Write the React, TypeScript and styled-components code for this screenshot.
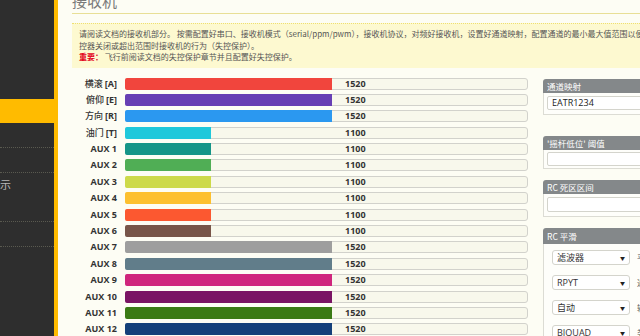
import React from "react";
import styled, { createGlobalStyle } from "styled-components";

const Global = createGlobalStyle`
  html, body { margin: 0; padding: 0; }
  body {
    width: 640px; height: 336px; overflow: hidden;
    background: #fdfdf4;
    font-family: "Open Sans", "Noto Sans CJK SC", sans-serif;
  }
`;

const Page = styled.div`
  display: flex;
  width: 640px;
  height: 336px;
  overflow: hidden;
`;

const Sidebar = styled.nav`
  flex: 0 0 54px;
  background: #2e2e2e;
  border-right: 4px solid #ffbb00;
  padding-top: 99px;
  overflow: hidden;
  display: flex;
  flex-direction: column;
`;

const NavItem = styled.div<{ $active?: boolean; $divider?: boolean }>`
  height: 24px;
  flex: 0 0 auto;
  background: ${(p) => (p.$active ? "#ffbb00" : "transparent")};
  border-bottom: ${(p) => (p.$divider ? "1px dotted #5a5a50" : "none")};
  color: #b8b8b8;
  font-family: "Noto Sans CJK SC", sans-serif;
  font-size: 11px;
  line-height: 22px;
  white-space: nowrap;
  text-indent: -11px;
`;

const Main = styled.main`
  flex: 0 0 auto;
  width: 720px;
  padding-left: 14px;
  display: flex;
  flex-direction: column;
`;

const Heading = styled.h1`
  margin: -8px 0 0 0;
  padding-bottom: 3px;
  font-family: "Noto Sans CJK SC", sans-serif;
  font-weight: 400;
  font-size: 15px;
  line-height: 18px;
  color: #7a7a7a;
  border-bottom: 1px solid #e8df96;
`;

const Note = styled.div`
  margin-top: 9px;
  background: #fdf9d0;
  border-top: 1px dotted #efdf70;
  padding: 4px 7px 5px;
  font-family: "Noto Sans CJK SC", sans-serif;
  font-size: 8px;
  line-height: 11.5px;
  color: #555;
`;

const NoteLine = styled.div`
  white-space: nowrap;
`;

const Important = styled.strong`
  color: #e2001a;
  font-weight: 700;
`;

const Columns = styled.div`
  display: flex;
  align-items: flex-start;
  margin-top: 10px;
`;

const Channels = styled.div`
  display: grid;
  grid-template-columns: 45px 403px;
  column-gap: 8px;
  row-gap: 4.4px;
`;

const ChannelLabel = styled.div`
  text-align: right;
  font-size: 9px;
  font-weight: 700;
  line-height: 12px;
  color: #333;
  white-space: nowrap;
`;

const CjkPart = styled.span`
  font-family: "Noto Sans CJK SC", sans-serif;
  font-weight: 500;
`;

const Track = styled.div`
  position: relative;
  height: 12px;
  box-sizing: border-box;
  border: 1px solid #d2d2cc;
  border-radius: 3px;
  background: #f8f8ec;
  display: flex;
`;

const Fill = styled.div<{ $color: string }>`
  background: ${(p) => p.$color};
  margin: -1px 0 -1px -1px;
  border-radius: 2px 0 0 2px;
`;

const Value = styled.span`
  position: absolute;
  left: 219px;
  top: 0;
  font-size: 9px;
  font-weight: 700;
  line-height: 10px;
  color: #333;
`;

const RightCol = styled.div`
  margin-left: 15px;
  margin-top: 1px;
  width: 160px;
  display: flex;
  flex-direction: column;
`;

const Panel = styled.section<{ $gap: number }>`
  margin-bottom: ${(p) => p.$gap}px;
`;

const PanelTitle = styled.div<{ $h?: number }>`
  height: ${(p) => p.$h ?? 14}px;
  background: #84888a;
  color: #fff;
  font-family: "Noto Sans CJK SC", sans-serif;
  font-size: 8.5px;
  line-height: ${(p) => p.$h ?? 14}px;
  padding-left: 4px;
  border-radius: 3px 3px 0 0;
  white-space: nowrap;
`;

const PanelBody = styled.div<{ $pad: string }>`
  background: #fefefa;
  border: 1px solid #dcdcd4;
  border-top: none;
  padding: ${(p) => p.$pad};
  display: flex;
  flex-direction: column;
  gap: 10px;
`;

const Field = styled.div<{ $h: number }>`
  height: ${(p) => p.$h}px;
  box-sizing: border-box;
  border: 1px solid #d4d4cc;
  border-radius: 2px;
  background: #fff;
  padding-left: 4px;
  font-size: 9px;
  line-height: ${(p) => p.$h - 2}px;
  color: #222;
`;

const SelectRow = styled.div`
  display: flex;
  align-items: center;
  gap: 7px;
  white-space: nowrap;
`;

const FakeSelect = styled.div`
  width: 78px;
  height: 15px;
  box-sizing: border-box;
  border: 1px solid #d4d4cc;
  border-radius: 3px;
  background: #fff;
  display: flex;
  align-items: center;
  justify-content: space-between;
  padding: 0 4px 0 4px;
  font-size: 9px;
  color: #333;
`;

const Arrow = styled.span`
  font-size: 5px;
  color: #222;
`;

const SideText = styled.span`
  font-family: "Noto Sans CJK SC", sans-serif;
  font-size: 8px;
  color: #555;
`;

const channels: { cjk?: string; label: string; color: string; value: number }[] = [
  { cjk: "横滚", label: "[A]", color: "#f1453d", value: 1520 },
  { cjk: "俯仰", label: "[E]", color: "#673fb4", value: 1520 },
  { cjk: "方向", label: "[R]", color: "#2b98f0", value: 1520 },
  { cjk: "油门", label: "[T]", color: "#1fc8db", value: 1100 },
  { label: "AUX 1", color: "#159588", value: 1100 },
  { label: "AUX 2", color: "#50ae55", value: 1100 },
  { label: "AUX 3", color: "#cdda49", value: 1100 },
  { label: "AUX 4", color: "#fdc02f", value: 1100 },
  { label: "AUX 5", color: "#fc5830", value: 1100 },
  { label: "AUX 6", color: "#785549", value: 1100 },
  { label: "AUX 7", color: "#9e9e9e", value: 1520 },
  { label: "AUX 8", color: "#617d8a", value: 1520 },
  { label: "AUX 9", color: "#cf267d", value: 1520 },
  { label: "AUX 10", color: "#7a1464", value: 1520 },
  { label: "AUX 11", color: "#3a7a14", value: 1520 },
  { label: "AUX 12", color: "#14407a", value: 1520 },
];

const smoothing = [
  { value: "滤波器", side: "平滑类型" },
  { value: "RPYT", side: "通道" },
  { value: "自动", side: "输入类型" },
  { value: "BIQUAD", side: "类型" },
];

export default function App() {
  const pct = (v: number) => ((v - 800) / 1400) * 403;
  return (
    <>
      <Global />
      <Page>
        <Sidebar>
          <NavItem $active />
          <NavItem $divider />
          <NavItem $divider />
          <NavItem>显示</NavItem>
          <NavItem $divider />
          <NavItem $divider />
        </Sidebar>
        <Main>
          <Heading>接收机</Heading>
          <Note>
            <NoteLine>
              请阅读文档的接收机部分。 按需配置好串口、接收机模式（serial/ppm/pwm），接收机协议，对频好接收机，设置好通道映射，配置通道的最小最大值范围以便所有通道都在1000-2000之间，设置好中点，确认飞
            </NoteLine>
            <NoteLine>控器关闭或超出范围时接收机的行为（失控保护）。</NoteLine>
            <NoteLine>
              <Important>重要：</Important> 飞行前阅读文档的失控保护章节并且配置好失控保护。
            </NoteLine>
          </Note>
          <Columns>
            <Channels>
              {channels.map((c) => (
                <React.Fragment key={c.label}>
                  <ChannelLabel>
                    {c.cjk && <CjkPart>{c.cjk} </CjkPart>}
                    {c.label}
                  </ChannelLabel>
                  <Track>
                    <Fill $color={c.color} style={{ width: `${pct(c.value)}px` }} />
                    <Value>{c.value}</Value>
                  </Track>
                </React.Fragment>
              ))}
            </Channels>
            <RightCol>
              <Panel $gap={21}>
                <PanelTitle>通道映射</PanelTitle>
                <PanelBody $pad="3px 3px 4px 3px">
                  <Field $h={14}>EATR1234</Field>
                </PanelBody>
              </Panel>
              <Panel $gap={11}>
                <PanelTitle>'摇杆低位' 阈值</PanelTitle>
                <PanelBody $pad="2px 3px 2px 3px">
                  <Field $h={14} />
                </PanelBody>
              </Panel>
              <Panel $gap={11}>
                <PanelTitle>RC 死区区间</PanelTitle>
                <PanelBody $pad="3px 3px 4px 3px">
                  <Field $h={15} />
                </PanelBody>
              </Panel>
              <Panel $gap={0}>
                <PanelTitle $h={16}>RC 平滑</PanelTitle>
                <PanelBody $pad="6px 3px 4px 8px">
                  {smoothing.map((s) => (
                    <SelectRow key={s.value}>
                      <FakeSelect>
                        <span>{s.value}</span>
                        <Arrow>▼</Arrow>
                      </FakeSelect>
                      <SideText>{s.side}</SideText>
                    </SelectRow>
                  ))}
                </PanelBody>
              </Panel>
            </RightCol>
          </Columns>
        </Main>
      </Page>
    </>
  );
}
